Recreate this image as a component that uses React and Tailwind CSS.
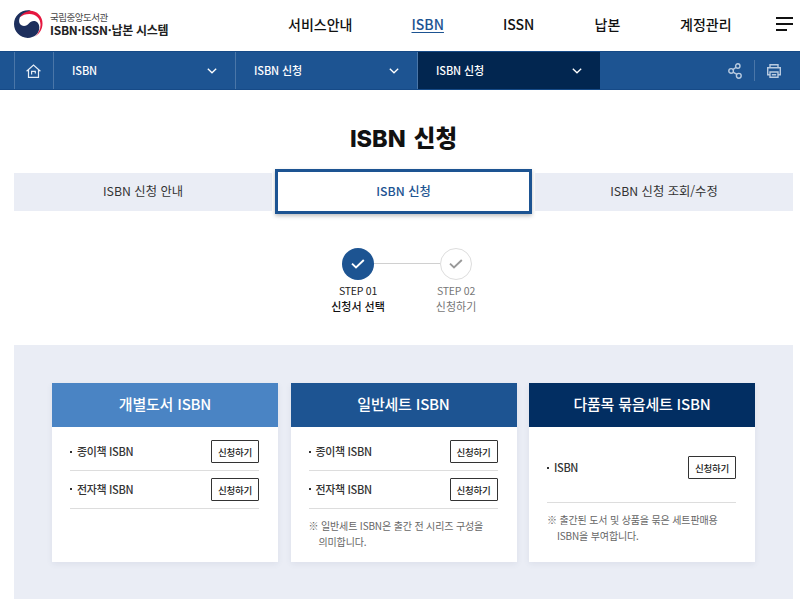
import React from 'react';

const menus = [
    { name: '서비스안내', style: 'w-[65px]' },
    { name: 'ISBN', style: 'w-[33px]', active: true },
    { name: 'ISSN', style: 'w-[33px]' },
    { name: '납본', style: 'w-[27px]' },
    { name: '계정관리', style: 'w-[53px]' },
];

const crumbs = [
    { name: 'ISBN', style: 'bg-[#1d5492] w-[182px]' },
    { name: 'ISBN 신청', style: 'bg-[#1d5492] w-[182px]' },
    { name: 'ISBN 신청', style: 'bg-[#022650] w-[183px]' },
];

const Logo = () => (
    <div className="flex items-center gap-[8px] w-[274px]">
        <svg width="29" height="28" viewBox="0 0 29 28" className="-mr-px">
            <path d="M5.500 7.500C8 2.500 12 .8 16 .8c7 0 12.500 5.500 12.500 12.700 0 5.500-2.700 10-7.500 13 3.700-3.200 5.500-7.300 5.500-11.700C26.500 8.200 21.800 4 15.500 4 11.500 4 8.500 5 5.500 7.500z" fill="#e5173f" />
            <path d="M17 .4C8 -1.200 0 5 0 14c0 7.800 6.200 13.900 13.700 13.900 6.500 0 11.600-4.400 11.600-10.400 0-4-2.300-6.500-5.500-6.500-4.500 0-5.300 5-9.800 5-3 0-4.900-2-4.900-4.900C5.100 5.500 9.500 1.800 17 .4z" fill="#1d2f5d" />
        </svg>
        <div className="flex flex-col pb-[3px] text-[#222]">
            <span className="text-[9.500px] leading-[14px] tracking-[-0.500px] text-[#444]">국립중앙도서관</span>
            <strong className="text-[12px] leading-[12px] font-bold tracking-[-0.270px] whitespace-nowrap">ISBN·ISSN·납본 시스템</strong>
        </div>
    </div>
);

const Chevron = () => (
    <svg width="10" height="6" viewBox="0 0 10 6" fill="none" stroke="#fff" strokeWidth="1.300">
        <path d="M.8.8 5 4.800 9.200.8" />
    </svg>
);

const HomeIcon = () => (
    <svg width="15" height="14" viewBox="0 0 15 14" fill="none" stroke="#e6edf6" strokeWidth="1.200" className="-ml-px">
        <path d="M.6 7.200 7.500 1l6.900 6.200" />
        <path d="M2.500 6v7.300h10V6" />
        <path d="M5.600 10.400V7.300h3.700V9.500" />
    </svg>
);

const ShareIcon = () => (
    <svg width="14" height="16" viewBox="0 0 14 16" fill="none" stroke="#b9cbe0" strokeWidth="1.400">
        <circle cx="3.100" cy="7.900" r="2.300" />
        <circle cx="9.800" cy="3" r="2.200" />
        <circle cx="10.800" cy="12.800" r="2.400" />
        <path d="M5 6.600 8.100 4.300M5.100 9.200l3.800 2.200" />
    </svg>
);

const PrintIcon = () => (
    <svg width="14" height="14" viewBox="0 0 14 14" fill="none" stroke="#b9cbe0" strokeWidth="1.400">
        <path d="M3 3.700V.8h8v2.900" />
        <path d="M3 10.800H.7V3.800h12.600v7H11" />
        <path d="M3 8h8v5.300H3zM4.800 10.700h4.400" />
    </svg>
);

const Check = ({ color }) => (
    <svg width="14" height="10" viewBox="0 0 14 10" fill="none" stroke={color} strokeWidth="1.900" className="-mt-px">
        <path d="M1 4.600 5 8.500 12.800 1" />
    </svg>
);

const Row = ({ name, style }) => (
    <li className={`flex items-center justify-between border-b border-[#ddd] ${style}`}>
        <span className="flex items-center text-[11px] font-medium text-[#333] tracking-[-0.350px]">
            <i className="w-[2px] h-[2px] bg-[#333] mr-[5px]"></i>
            {name}
        </span>
        <button className="w-[48px] h-[23px] pt-px border border-[#333] rounded-[1px] text-[9.500px] font-medium text-[#222] tracking-[-0.300px]">
            신청하기
        </button>
    </li>
);

const Note = ({ children }) => (
    <p className="pt-[9px] pl-[10px] -indent-[10px] text-[10px] leading-[16px] tracking-[-0.150px] text-[#666] whitespace-nowrap">
        {children}
    </p>
);

const Card = ({ title, color, children }) => (
    <div className="w-[226px] h-[179px] bg-white shadow-[0_2px_6px_rgba(60,80,120,0.08)]">
        <h3 className={`h-[44px] leading-[42px] text-center text-white text-[15px] font-medium tracking-[-0.200px] ${color}`}>{title}</h3>
        <div className="pl-[18px] pr-[19px]">{children}</div>
    </div>
);

const App = () => {
    return (
        <div
            lang="ko"
            className="w-[800px] h-[608px] bg-white overflow-hidden font-['Noto_Sans_CJK_KR',sans-serif] text-[#222]"
        >
            <header className="flex items-center h-[51px] pl-[14px] pr-[7px] pb-[3px]">
                <Logo />
                <nav className="flex flex-1 justify-between pr-[43px] text-[14px] font-medium leading-[20px] whitespace-nowrap">
                    {menus.map((menu) => (
                        <a
                            key={menu.name}
                            href="#"
                            className={`${menu.style} ${menu.active ? 'text-[#1d5492] underline underline-offset-[2px]' : 'text-[#111]'}`}
                        >
                            {menu.name}
                        </a>
                    ))}
                </nav>
                <div className="flex flex-col gap-[4px] w-[17px]">
                    <i className="h-[2px] w-[17px] bg-[#111]"></i>
                    <i className="h-[2px] w-[17px] bg-[#111]"></i>
                    <i className="h-[2px] w-[11px] bg-[#111]"></i>
                </div>
            </header>

            {/* Breadcrumb */}
            <div className="flex h-[39px] bg-[#1d5492] pl-[14px] border-y border-[#164a87]">
                <a href="#" className="flex items-center justify-center w-[39px] border-l border-[#4a76a8]">
                    <HomeIcon />
                </a>
                {crumbs.map((crumb, index) => (
                    <div
                        key={index}
                        className={`flex items-center justify-between border-l border-[#4a76a8] pl-[18px] pr-[18.500px] ${crumb.style}`}
                    >
                        <span className="text-[11px] font-medium text-white tracking-[-0.100px]">{crumb.name}</span>
                        <Chevron />
                    </div>
                ))}
                <div className="flex flex-1 items-center justify-end pr-[19px]">
                    <ShareIcon />
                    <i className="w-px h-[21px] bg-[#4a76a8] ml-[12px] mr-[12px]"></i>
                    <PrintIcon />
                </div>
            </div>

            <h2 className="pt-[31px] h-[79px] pl-[7px] text-center text-[23.500px] leading-[36px] font-extrabold [word-spacing:3px] text-[#111] font-['Inter','Noto_Sans_CJK_KR',sans-serif]">
                ISBN 신청
            </h2>

            {/* Tabs */}
            <div className="flex items-center gap-[3px] h-[45px] pl-[14px] text-[12.300px] text-center">
                <a href="#" className="w-[258px] h-[38px] leading-[36px] bg-[#eaedf5] text-[#333]">ISBN 신청 안내</a>
                <a href="#" className="w-[257px] h-[45px] leading-[38px] border-[3px] border-[#1d5492] bg-white text-[#1d5492] font-medium shadow-[0_2px_4px_rgba(0,0,0,0.25)]">ISBN 신청</a>
                <a href="#" className="w-[258px] h-[38px] leading-[36px] bg-[#eaedf5] text-[#333]">ISBN 신청 조회/수정</a>
            </div>

            {/* Steps */}
            <div className="flex justify-center pt-[34px] h-[131px] pl-[14px]">
                <div className="flex flex-col items-center w-[32px] whitespace-nowrap">
                    <div className="flex items-center justify-center w-[32px] h-[32px] shrink-0 rounded-full bg-[#1d5492]">
                        <Check color="#fff" />
                    </div>
                    <span className="mt-[3px] text-[10.500px] leading-[15px] tracking-[-0.250px]">STEP 01</span>
                    <strong className="text-[11px] leading-[16px] font-medium text-[#111]">신청서 선택</strong>
                </div>
                <i className="w-[66px] h-px mt-[15px] bg-[#d0d0d0]"></i>
                <div className="flex flex-col items-center w-[32px] whitespace-nowrap text-[#777]">
                    <div className="flex items-center justify-center w-[32px] h-[32px] shrink-0 rounded-full border border-[#ddd]">
                        <Check color="#999" />
                    </div>
                    <span className="mt-[3px] text-[10.500px] leading-[15px] tracking-[-0.250px]">STEP 02</span>
                    <span className="text-[11px] leading-[16px]">신청하기</span>
                </div>
            </div>

            <section className="flex items-start gap-[12.500px] w-[779px] h-[254px] ml-[14px] pt-[38px] pl-[38px] bg-[#eaedf5]">
                <Card title="개별도서 ISBN" color="bg-[#4a84c4]">
                    <ul className="pt-[6px]">
                        <Row name="종이책 ISBN" style="h-[38px]" />
                        <Row name="전자책 ISBN" style="h-[37.500px]" />
                    </ul>
                </Card>
                <Card title="일반세트 ISBN" color="bg-[#1d5492]">
                    <ul className="pt-[6px]">
                        <Row name="종이책 ISBN" style="h-[38px]" />
                        <Row name="전자책 ISBN" style="h-[37.500px]" />
                    </ul>
                    <Note>※ 일반세트 ISBN은 출간 전 시리즈 구성을<br />의미합니다.</Note>
                </Card>
                <Card title="다품목 묶음세트 ISBN" color="bg-[#022e62]">
                    <ul className="pt-[6px]">
                        <Row name="ISBN" style="h-[70px]" />
                    </ul>
                    <Note>※ 출간된 도서 및 상품을 묶은 세트판매용<br />ISBN을 부여합니다.</Note>
                </Card>
            </section>
        </div>
    );
};

export default App;
